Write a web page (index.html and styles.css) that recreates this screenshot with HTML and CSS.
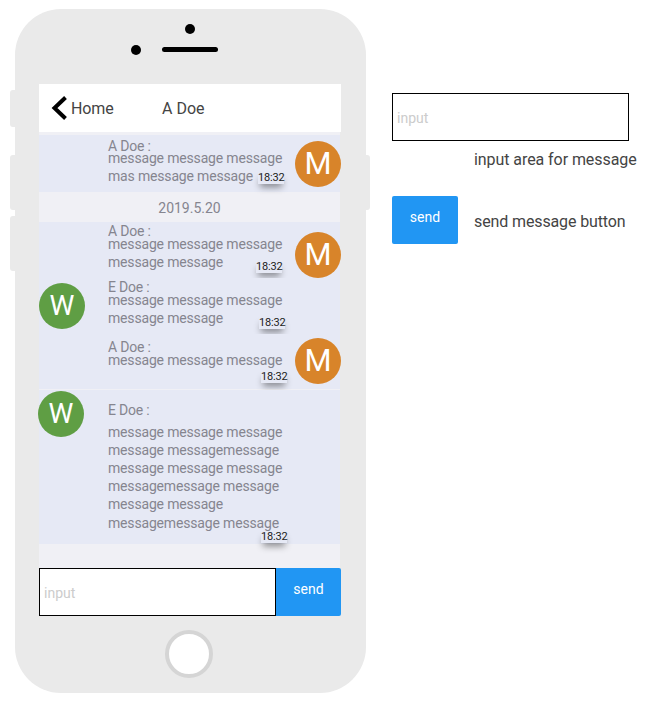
FILE: index.html
```html
<!DOCTYPE html>
<html lang="en">
<head>
    <meta charset="UTF-8">
    <title>Chat</title>
    <link rel="stylesheet" href="styles.css">
</head>
<body>
    <div class="page">
        <div class="phone">
            <span class="side side-mute"></span>
            <span class="side side-up"></span>
            <span class="side side-down"></span>
            <span class="side side-power"></span>

            <div class="phone-top">
                <span class="camera"></span>
                <span class="lens"></span>
                <span class="speaker"></span>
            </div>

            <div class="screen">
                <div class="header">
                    <svg class="back" width="16" height="24" viewBox="0 0 16 24">
                        <path d="M14.5 1.5 L3.5 12 L14.5 22.5" fill="none" stroke="#000" stroke-width="4"/>
                    </svg>
                    <span class="back-label">Home</span>
                    <span class="title">A Doe</span>
                </div>

                <div class="chat">
                    <div class="msg msg-first">
                        <div class="name">A Doe :</div>
                        <div class="text">message message message<br>mas message message</div>
                        <span class="time time-1">18:32</span>
                        <span class="avatar avatar-m avatar-1">M</span>
                    </div>

                    <div class="date">2019.5.20</div>

                    <div class="group">
                        <div class="msg msg-two">
                            <div class="name">A Doe :</div>
                            <div class="text">message message message<br>message message</div>
                            <span class="time time-2">18:32</span>
                            <span class="avatar avatar-m avatar-2">M</span>
                        </div>
                        <div class="msg msg-two">
                            <div class="name">E Doe :</div>
                            <div class="text">message message message<br>message message</div>
                            <span class="time time-3">18:32</span>
                            <span class="avatar avatar-w avatar-3">W</span>
                        </div>
                        <div class="msg msg-one">
                            <div class="name">A Doe :</div>
                            <div class="text">message message message</div>
                            <span class="time time-4">18:32</span>
                            <span class="avatar avatar-m avatar-4">M</span>
                        </div>
                    </div>

                    <div class="msg msg-long">
                        <div class="name name-long">E Doe :</div>
                        <div class="text text-long">message message message<br>message messagemessage<br>message message message<br>messagemessage message<br>message message<br>messagemessage message</div>
                        <span class="time time-5">18:32</span>
                        <span class="avatar avatar-w avatar-5">W</span>
                    </div>
                </div>

                <div class="input-row">
                    <div class="input input-wide">input</div>
                    <div class="send send-joined">send</div>
                </div>
            </div>

            <div class="phone-bottom">
                <span class="home-btn"></span>
            </div>
        </div>

        <div class="notes">
            <div class="input input-note">input</div>
            <p class="note note-input">input area for message</p>
            <div class="note-row">
                <div class="send send-note">send</div>
                <p class="note">send message button</p>
            </div>
        </div>
    </div>
</body>
</html>
```

FILE: styles.css
```css
body {
    margin: 0;
    background-color: #fff;
    font-family: 'Roboto', sans-serif;
    color: #444;
}

.page {
    display: flex;
    align-items: flex-start;
    padding: 9px 0 0 15px;
}

/* phone body */
.phone {
    position: relative;
    width: 351px;
    height: 684px;
    flex-shrink: 0;
    background-color: #eaeaea;
    border-radius: 46px;
}

.side {
    position: absolute;
    width: 5px;
    background-color: #eaeaea;
    border-radius: 3px 0 0 3px;
}

.side-mute { left: -5px; top: 81px; height: 37px; }
.side-up { left: -5px; top: 146px; height: 55px; }
.side-down { left: -5px; top: 207px; height: 55px; }
.side-power { left: 351px; top: 146px; width: 4px; height: 55px; border-radius: 0 3px 3px 0; }

.phone-top {
    position: relative;
    height: 75px;
}

.camera {
    position: absolute;
    left: 170px;
    top: 15px;
    width: 10px;
    height: 10px;
    background-color: #000;
    border-radius: 50%;
}

.lens {
    position: absolute;
    left: 116px;
    top: 36px;
    width: 10px;
    height: 10px;
    background-color: #000;
    border-radius: 50%;
}

.speaker {
    position: absolute;
    left: 147px;
    top: 38px;
    width: 56px;
    height: 5px;
    background-color: #000;
    border-radius: 3px;
}

/* screen */
.screen {
    width: 302px;
    margin-left: 24px;
}

.header {
    display: flex;
    align-items: center;
    height: 48px;
    padding-left: 12px;
    background-color: #fff;
    font-size: 16px;
}

.back {
    flex-shrink: 0;
}

.back-label {
    margin-left: 4px;
    width: 91px;
    letter-spacing: -0.1px;
}

.chat {
    width: 301px;
    height: 436px;
    padding-top: 3px;
    box-sizing: border-box;
    background-color: #f0f0f5;
}

.date {
    height: 30px;
    color: #85858f;
    font-size: 14px;
    line-height: 32px;
    text-align: center;
}

.group {
    background-color: #e6e9f5;
    height: 167px;
    margin-bottom: 1px;
}

.msg {
    position: relative;
    padding-left: 69px;
    background-color: #e6e9f5;
    color: #85858f;
    font-size: 14px;
    box-sizing: border-box;
}

.msg-first { height: 57px; padding-top: 4px; }
.msg-two { height: 56px; padding-top: 2px; }
.msg-one { height: 55px; padding-top: 6px; }
.msg-long { height: 154px; padding-top: 13px; }

.msg-first .name { height: 10px; }

.name {
    line-height: 14px;
    height: 11px;
    letter-spacing: -0.2px;
}

.msg .name-long {
    height: 19.6px;
}

.text {
    line-height: 18px;
    white-space: nowrap;
    letter-spacing: -0.17px;
}

.text-long {
    line-height: 18.2px;
}

.time {
    position: absolute;
    font-size: 11px;
    line-height: 12px;
    color: #222;
    letter-spacing: -0.2px;
    box-shadow: 0 5px 7px -2px rgba(0, 0, 0, 0.45);
}

.time-1 { left: 219px; top: 37px; }
.time-2 { left: 217px; top: 39px; }
.time-3 { left: 220px; top: 39px; }
.time-4 { left: 222px; top: 37px; }
.time-5 { left: 222px; top: 141px; }

.avatar {
    position: absolute;
    width: 46px;
    height: 46px;
    border-radius: 50%;
    color: #fff;
    font-size: 31px;
    line-height: 46px;
    letter-spacing: 0;
    text-align: center;
}

.avatar-m { background-color: #d8842a; }
.avatar-w { background-color: #5f9e44; font-size: 28px; }

.avatar-1 { left: 256px; top: 6px; }
.avatar-2 { left: 256px; top: 10px; }
.avatar-3 { left: 0; top: 5px; }
.avatar-4 { left: 256px; top: 4px; }
.avatar-5 { left: -1px; top: 1px; }

/* input and button */
.input-row {
    display: flex;
}

.input {
    box-sizing: border-box;
    height: 48px;
    padding-left: 4px;
    border: 1px solid #000;
    background-color: #fff;
    color: #ccc;
    font-size: 14px;
    line-height: 48px;
}

.input-wide {
    width: 237px;
}

.send {
    box-sizing: border-box;
    height: 48px;
    background-color: #2196f3;
    border-radius: 2px;
    color: #fff;
    font-size: 14px;
    line-height: 42px;
    text-align: center;
}

.send-joined {
    width: 65px;
    border-radius: 0 2px 2px 0;
}

.phone-bottom {
    display: flex;
    justify-content: center;
    padding-top: 14px;
}

.home-btn {
    box-sizing: border-box;
    width: 48px;
    height: 48px;
    margin-left: -3px;
    background-color: #fff;
    border: 4px solid #d5d5d5;
    border-radius: 50%;
}

/* notes on the right */
.notes {
    margin-left: 26px;
    padding-top: 84px;
}

.input-note {
    width: 237px;
}

.note {
    margin: 0;
    font-size: 16px;
    line-height: 19px;
    white-space: nowrap;
    letter-spacing: -0.07px;
}

.note-input {
    margin: 9px 0 0 82px;
}

.note-row {
    display: flex;
    margin-top: 27px;
}

.send-note {
    width: 66px;
}

.note-row .note {
    margin: 16px 0 0 16px;
    letter-spacing: -0.12px;
}
```
